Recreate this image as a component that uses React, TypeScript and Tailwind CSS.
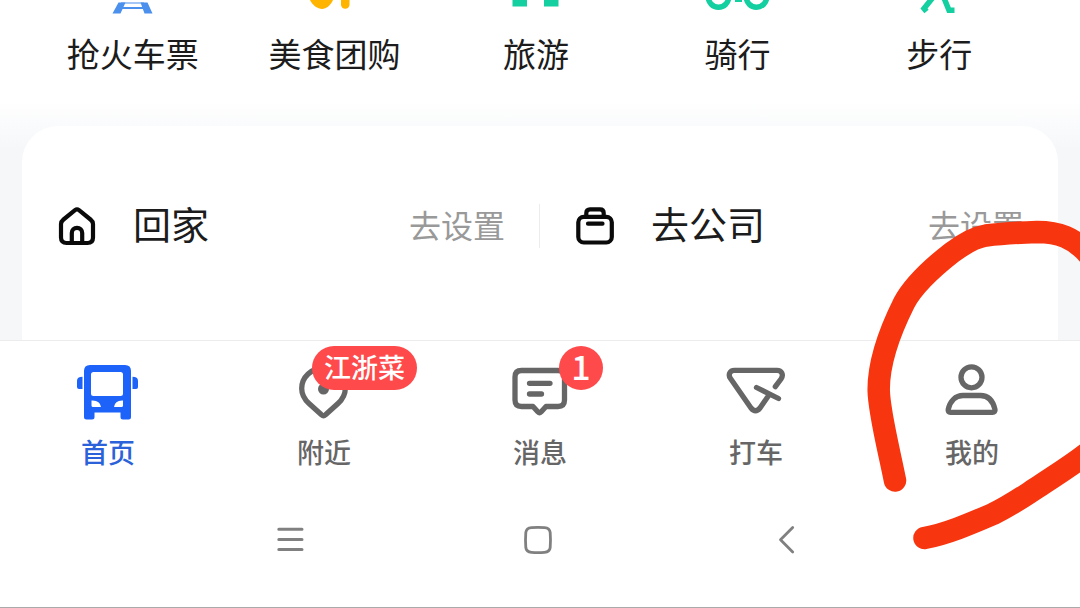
import type { ReactNode } from "react";

const shortcuts: { label: string; icon: ReactNode }[] = [
  {
    label: "抢火车票",
    icon: (
      <g fill="#4a90ec">
        <path d="M17.500 2.500H24.500L19.500 13.500H11.500ZM39.500 2.500H46.500L51.500 13.500H43.500Z" />
        <path d="M20 2.500H43V3.500H20ZM21 7H42V9H21Z" />
      </g>
    ),
  },
  {
    label: "美食团购",
    icon: (
      <g fill="#ffb400">
        <path d="M8 0H31C29 5 24 9 20 9S10 5 8 0Z" />
        <path d="M39 0H47.500V5A4.300 4.300 0 0 1 39 5Z" />
      </g>
    ),
  },
  { label: "旅游", icon: <path fill="#14cfa0" d="M8.500 0H23V6.500H8.500ZM40 0H54.500V6.500H40Z" /> },
  {
    label: "骑行",
    icon: (
      <g fill="none" stroke="#14cfa0" strokeWidth="5.500">
        <circle cx="12.500" cy="-3" r="10.200" />
        <circle cx="50.500" cy="-3" r="10.200" />
        <path d="M29 0H36" strokeWidth="4" />
      </g>
    ),
  },
  {
    label: "步行",
    icon: (
      <path
        d="M25.500 -2L17 8.500 19.500 11.500M37 -2L42 10.300H47.500"
        fill="none"
        stroke="#14cfa0"
        strokeWidth="5.500"
      />
    ),
  },
];

const places: { label: string; icon: ReactNode }[] = [
  {
    label: "回家",
    icon: (
      <>
        <path d="M18 4.200Q20 2.600 22 4.200L33.500 13.500Q36 15.500 36 18V31.500Q36 37 30.500 37H9.500Q4 37 4 31.500V18Q4 15.500 6.500 13.500Z" />
        <path d="M14.800 37V27A5.200 5.200 0 0 1 25.200 27V37" />
      </>
    ),
  },
  {
    label: "去公司",
    icon: (
      <>
        <rect x="3.300" y="10.800" width="33.500" height="25.700" rx="5.500" />
        <path d="M11.300 10V7Q11.300 3.300 15 3.300H25Q28.700 3.300 28.700 7V10M13 17.700H27.500" />
      </>
    ),
  },
];

const tabs: { label: string; active?: boolean; badge?: ReactNode; icon: ReactNode }[] = [
  {
    label: "首页",
    active: true,
    icon: (
      <g fill="#1d63fa">
        <path
          fillRule="evenodd"
          d="M18 5H53Q59 5 59 11V57Q59 59.500 56.500 59.500H51Q48.500 59.500 48.500 57V52.500H22.500V57Q22.500 59.500 20 59.500H14.500Q12 59.500 12 57V11Q12 5 18 5ZM21.500 12Q19 12 19 14.500V33.500Q19 36 21.500 36H48.500Q51 36 51 33.500V14.500Q51 12 48.500 12ZM19.500 40.500V45.500Q19.500 47 21 47H29Q28 40 19.500 40.500ZM51 40.500V45.500Q51 47 49.500 47H42Q43 40 51 40.500Z"
        />
        <path d="M10.500 16.800V29H7Q5 29 5 27V21Q5 16.800 10.500 16.800ZM60.500 16.800V29H64Q66 29 66 27V21Q66 16.800 60.500 16.800Z" />
      </g>
    ),
  },
  {
    label: "附近",
    badge: (
      <span className="absolute -top-3.5 left-6 flex h-11 items-center rounded-full bg-[#ff4a4c] px-3 pb-0.5 text-[27px] leading-10 font-medium whitespace-nowrap text-white">
        江浙菜
      </span>
    ),
    icon: (
      <>
        <path d="M33.500 54.800L21 43.500C15 38 13.700 33 13.700 28.500A21.800 20.500 0 0 1 57.300 28.500C57.300 33 56 38 50 43.500L37.500 54.800Q35.500 56.500 33.500 54.800Z" />
        <circle cx="35.500" cy="29" r="5.500" fill="#666" stroke="none" />
      </>
    ),
  },
  {
    label: "消息",
    badge: (
      <span className="absolute -top-3.5 left-[55px] flex size-11 items-center justify-center rounded-full bg-[#ff4a4c] pb-1 text-[34px] leading-10 font-medium text-white">
        1
      </span>
    ),
    icon: (
      <path d="M17.500 10.500H54Q60.500 10.500 60.500 17V40Q60.500 46.500 54 46.500H42L37 52Q35.500 53.500 34 52L29 46.500H17.500Q11 46.500 11 40V17Q11 10.500 17.500 10.500ZM25.500 23.300H46M25.500 34H37.500" />
    ),
  },
  {
    label: "打车",
    icon: (
      <path d="M55.300 26.700L61 19C64 14.500 61.500 10.400 57 10.400H14.500C9.500 10.400 8 15 10.500 18.500L31 48Q35.500 53.500 40 48L49.300 34.500M36.500 27.500L58.500 38.500" />
    ),
  },
  {
    label: "我的",
    icon: (
      <>
        <circle cx="35.500" cy="17.300" r="10.500" />
        <path d="M14.500 52.300H56.500Q59.500 52.300 59 49.500C57 41 52 35.500 44.500 35.500H27C19.500 35.500 14 41 12.200 49.500Q11.700 52.300 14.500 52.300Z" />
      </>
    ),
  },
];

export default function App() {
  return (
    <div className="relative overflow-hidden bg-white font-['Noto_Sans_CJK_SC','Noto_Sans',sans-serif] text-[#1c1c1c]">
      <nav aria-label="出行服务" className="grid h-[100px] grid-cols-5 pr-10 pl-8">
        {shortcuts.map((s) => (
          <button key={s.label} type="button" className="flex flex-col items-center gap-3.5">
            <svg className="h-4 w-16 shrink-0" viewBox="0 0 64 16" aria-hidden="true">
              {s.icon}
            </svg>
            <span className="text-[33px] leading-[46px] whitespace-nowrap">{s.label}</span>
          </button>
        ))}
      </nav>

      <main className="bg-linear-to-b from-white to-[#f5f7f9] to-[50px] px-[22px] pt-[26px]">
        <section className="flex h-[214px] items-start rounded-t-[36px] bg-white pt-[78px]">
          {places.map((p) => (
            <button
              key={p.label}
              type="button"
              className="flex h-11 w-1/2 items-center border-[#ececec] pr-[34px] pl-[35px] first:border-r"
            >
              <svg
                className="size-10"
                viewBox="0 0 40 40"
                fill="none"
                stroke="#0a0a0a"
                strokeWidth="4.200"
                strokeLinecap="round"
                strokeLinejoin="round"
                aria-hidden="true"
              >
                {p.icon}
              </svg>
              <span className="ml-9 self-start text-[38px] leading-[38px]">{p.label}</span>
              <span className="ml-auto self-start text-[32px] leading-10 text-[#999]">去设置</span>
            </button>
          ))}
        </section>
      </main>

      <nav aria-label="主导航" className="grid h-[150px] grid-cols-5 border-t border-[#ececec] bg-white">
        {tabs.map((t) => (
          <a
            key={t.label}
            href="#"
            aria-current={t.active ? "page" : undefined}
            className={`flex flex-col items-center pt-[19px] font-medium ${t.active ? "text-[#2b62d9]" : "text-[#666]"}`}
          >
            <span className="relative flex">
              <svg
                className="h-16 w-[72px]"
                viewBox="0 0 72 64"
                fill="none"
                stroke={t.active ? "none" : "#666"}
                strokeWidth="5.300"
                strokeLinecap="round"
                strokeLinejoin="round"
                aria-hidden="true"
              >
                {t.icon}
              </svg>
              {t.badge}
            </span>
            <span className="mt-2 text-[27px] leading-10">{t.label}</span>
          </a>
        ))}
      </nav>

      <footer className="grid h-[118px] grid-cols-3 border-b border-[#aaa] pt-[30px] pr-[170px] pl-[166px]">
        <button type="button" aria-label="最近任务" className="flex h-10 items-center justify-center">
          <svg className="size-8" viewBox="0 0 32 32" stroke="#808080" strokeWidth="3" strokeLinecap="round" aria-hidden="true">
            <path d="M4.800 5.300H28M4.800 15.500H28M4.800 25.500H28" />
          </svg>
        </button>
        <button type="button" aria-label="主屏幕" className="flex h-10 items-center justify-center">
          <svg className="size-8" viewBox="0 0 32 32" fill="none" stroke="#808080" strokeWidth="2.800" aria-hidden="true">
            <path d="M9.500 3.600Q16 3 22.500 3.600Q27.700 4 28.200 8.500Q28.800 16 28.200 23.500Q27.700 28 22.500 28.400Q16 29 9.500 28.400Q4.300 28 3.800 23.500Q3.200 16 3.800 8.500Q4.300 4 9.500 3.600Z" />
          </svg>
        </button>
        <button type="button" aria-label="返回" className="flex h-10 items-center justify-center">
          <svg
            className="size-8"
            viewBox="0 0 32 32"
            fill="none"
            stroke="#808080"
            strokeWidth="2.800"
            strokeLinecap="round"
            strokeLinejoin="round"
            aria-hidden="true"
          >
            <path d="M22.700 3.500L10.500 15.800 22.700 28" />
          </svg>
        </button>
      </footer>

      <svg
        className="pointer-events-none absolute top-[200px] right-0 h-[360px] w-[230px]"
        viewBox="0 0 230 360"
        fill="none"
        stroke="#f7350f"
        strokeWidth="22.500"
        strokeLinecap="round"
        strokeLinejoin="round"
        aria-hidden="true"
      >
        <path d="M45 280.500C39 250 29 212 28.700 190C28.500 160 42 127 54 103C64 84 86 65 102 52.500C114 43.500 124 37.500 136 35.500C152 33.500 170 32.500 187 32C208 32 224 37 240 56" />
        <path d="M74.500 338C97 334 122 323 143 314C160 306 174 296 188 287C206 275 224 264 240 251" />
      </svg>
    </div>
  );
}
